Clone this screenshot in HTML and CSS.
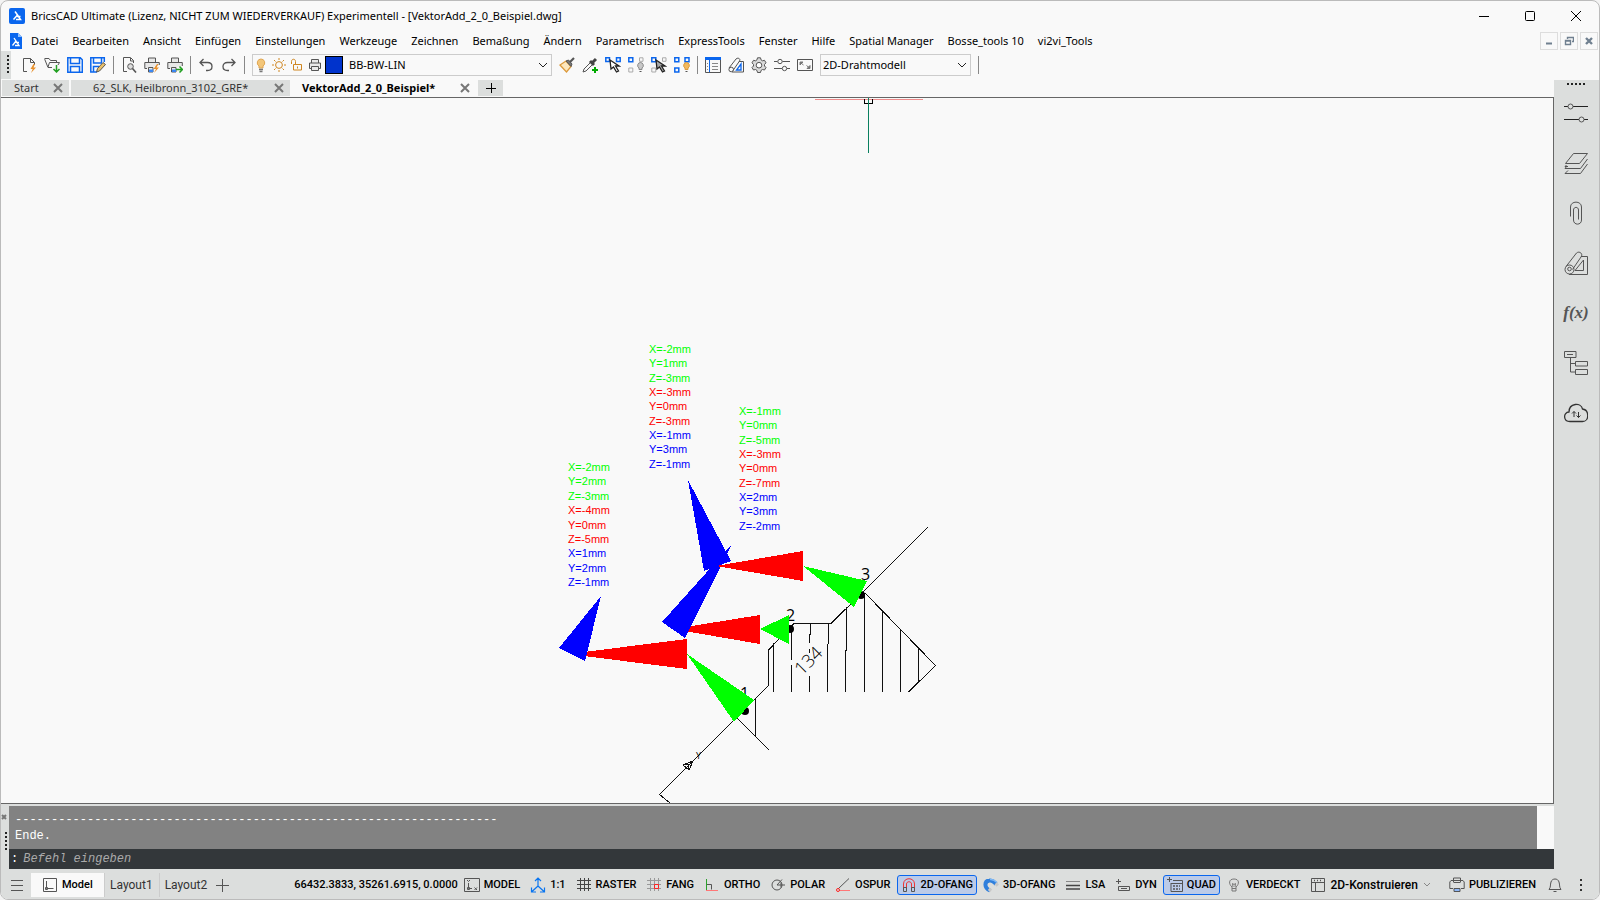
FILE: index.html
```html
<!DOCTYPE html>
<html lang="de">
<head>
    <meta charset="UTF-8">
    <meta name="viewport" content="width=device-width, initial-scale=1.0">
    <title>BricsCAD Ultimate - [VektorAdd_2_0_Beispiel.dwg]</title>
    <link rel="stylesheet" href="styles.css">
</head>
<body>
    <div class="window">
        <header class="titlebar">
            <svg class="logo" viewBox="0 0 16 16"><rect x="0" y="0" width="16" height="16" rx="2" fill="#0a66ee"/><path d="M6 3.500l2.500 3.500M8.500 7L4.500 11.500M8 8.500h3.500M8.500 7l3 4.500H7" fill="none" stroke="#fff" stroke-width="1.500"/></svg>
            <h1>BricsCAD Ultimate (Lizenz, NICHT ZUM WIEDERVERKAUF) Experimentell - [VektorAdd_2_0_Beispiel.dwg]</h1>
            <div class="window-buttons">
                <button aria-label="Minimieren"><svg viewBox="0 0 10 10"><path d="M0 5.500h10"/></svg></button>
                <button aria-label="Maximieren"><svg viewBox="0 0 10 10"><rect x=".5" y=".5" width="9" height="9" rx="1"/></svg></button>
                <button aria-label="Schließen"><svg viewBox="0 0 10 10"><path d="M0 0l10 10M10 0L0 10"/></svg></button>
            </div>
        </header>

        <nav class="menubar">
            <svg class="logo doc" viewBox="0 0 16 16"><path d="M2 0h8l4 4v12H2z" fill="#0a66ee"/><path d="M10 0l4 4h-4z" fill="#8fc0ff"/><path d="M6 5l2 3M8 8l-3.500 4.500M8 9.500h3M8 8l3 4.500H7" fill="none" stroke="#fff" stroke-width="1.300"/></svg>
            <button>Datei</button>
            <button>Bearbeiten</button>
            <button>Ansicht</button>
            <button>Einfügen</button>
            <button>Einstellungen</button>
            <button>Werkzeuge</button>
            <button>Zeichnen</button>
            <button>Bemaßung</button>
            <button>Ändern</button>
            <button>Parametrisch</button>
            <button>ExpressTools</button>
            <button>Fenster</button>
            <button>Hilfe</button>
            <button>Spatial Manager</button>
            <button>Bosse_tools 10</button>
            <button>vi2vi_Tools</button>
            <div class="doc-buttons">
                <button aria-label="Zeichnung minimieren"><svg viewBox="0 0 10 10"><path d="M2 7.500h6" stroke-width="2"/></svg></button>
                <button aria-label="Zeichnung wiederherstellen"><svg viewBox="0 0 10 10"><path d="M3.500 3V1.500h6v4H8M3 1.500h6.500M1.500 4.500h5v4h-5zM1 5h6" stroke-width="1.400"/></svg></button>
                <button aria-label="Zeichnung schließen"><svg viewBox="0 0 10 10"><path d="M2 2l6 6M8 2L2 8" stroke-width="2.400"/></svg></button>
            </div>
        </nav>

        <div class="toolbar">
            <span class="grip"></span>
            <button aria-label="Neu"><svg viewBox="0 0 16 16"><path d="M6 14.500H2.500v-13h7l4 4V8M9.500 1.500v4h4"/><path d="M12.500 7l-3 5h2.200L10 16l5-5.500h-2.500L14 7z" fill="#e8912d" stroke="none"/></svg></button>
            <button aria-label="Öffnen"><svg viewBox="0 0 16 16"><path d="M8 10.500H4L.8 2.500V1.500H5l1.500 2h6v2M4 10l1.500-4.500h10L14 8"/><path d="M12.500 8v6.500M9.500 12l3 3 3-3" stroke="#22a022" stroke-width="1.500"/></svg></button>
            <button aria-label="Speichern"><svg viewBox="0 0 16 16"><path d="M.8.800h12.500l2 2v12.500H.8zM3.500 1v5.500h9V1M3.500 15V9.500h9V15" stroke="#0a66ee" stroke-width="1.500"/></svg></button>
            <button aria-label="Speichern unter"><svg viewBox="0 0 16 16"><path d="M7 15H.8V.800h13.500V5M3.500 1v5h8V1M3.500 15V9.500H9" stroke="#0a66ee" stroke-width="1.500"/><path d="M6.500 15l1-3.500 5.500-6 2.500 2-6 6.500z" fill="#e9c06a" stroke="#555"/></svg></button>
            <span class="sep"></span>
            <button aria-label="Seitenansicht"><svg viewBox="0 0 16 16"><path d="M6 14.500H2.500v-14h7l3 3V6M9.500 1v3h3"/><circle cx="9.500" cy="9.500" r="2.800" fill="#ddd"/><path d="M11.500 11.500l3.500 4" stroke-width="1.600"/></svg></button>
            <button aria-label="Schnelldruck"><svg viewBox="0 0 16 16"><path d="M4.500 5V1h7v4M3 11.500H.8V5.500h14.500V8M4.500 15V10.500H9V15z" fill="#e8e8e8"/><path d="M5 12.500h4V15H5z" fill="#3b86f0" stroke="none"/><path d="M13 7l-3.500 5H12l-2 4 5-5.500h-2.500L14.500 7z" fill="#e8912d" stroke="none"/></svg></button>
            <button aria-label="Drucken"><svg viewBox="0 0 16 16"><path d="M4.500 5V1h7v4M3 11.500H.8V5.500h14.500V9M4.500 15V10.500H9V15z" fill="#e8e8e8"/><path d="M5 12.500h4V15H5z" fill="#3b86f0" stroke="none"/><path d="M9 12.500h6M12.500 9.500l3 3-3 3" stroke="#22a022" stroke-width="1.500"/></svg></button>
            <span class="sep"></span>
            <button aria-label="Rückgängig"><svg viewBox="0 0 16 16"><path d="M5.500 2L2 5.500 5.500 9M2 5.500h7.500c6 0 6 8 0 8H8" stroke-width="1.300"/></svg></button>
            <button aria-label="Wiederholen"><svg viewBox="0 0 16 16"><path d="M10.500 2L14 5.500 10.500 9M14 5.500H6.500c-6 0-6 8 0 8H8" stroke-width="1.300"/></svg></button>
            <span class="sep"></span>
            <div class="combo layer-combo">
                <svg viewBox="0 0 16 16"><path d="M8 2a3.800 3.800 0 0 0-2 7v2h4V9A3.800 3.800 0 0 0 8 2z" fill="#f3c679" stroke="#e0a550"/><path d="M6 12.500h4M6.500 14.500h3" stroke="#777" stroke-width="1.500"/></svg>
                <svg viewBox="0 0 16 16"><circle cx="8" cy="8" r="3.400" stroke="#cf8620"/><path d="M8 1v2M8 13v2M1 8h2M13 8h2M3 3l1.500 1.500M11.500 11.500L13 13M13 3l-1.500 1.500M3 13l1.500-1.500" stroke="#cf8620"/></svg>
                <svg viewBox="0 0 16 16"><path d="M4.500 7.500h8v5.500h-8zM2.500 7V4.500c0-3 4-3 4 0v3M8.500 9.500v2" stroke="#cf8620"/></svg>
                <svg viewBox="0 0 16 16"><path d="M4.500 6V2.500h7V6M4 11.500H2.500V6h11v5.500H12M4.500 9.500h7v4h-7z" fill="#e9e9e9"/></svg>
                <span class="swatch"></span>
                <select aria-label="Layer"><option>BB-BW-LIN</option></select>
                <svg class="chevron" viewBox="0 0 10 10"><path d="M1 3l4 4 4-4"/></svg>
            </div>
            <button aria-label="Eigenschaften übertragen"><svg viewBox="0 0 16 16"><path d="M1 8l6-4 5 5.500-4.500 5.500z" fill="#fde7bd" stroke="#dc9a3c" stroke-width="1.300"/><path d="M7 4l2.500-1L13 7l-1 2.500z" fill="#777" stroke="#555"/><path d="M11 5l4-4" stroke="#555" stroke-width="2.200"/></svg></button>
            <button aria-label="Pipette"><svg viewBox="0 0 16 16"><path d="M9 5L2 12l-1 3 3-1 7-7"/><path d="M8 4l4 4M10.500 5.500L14 2" stroke="#444" stroke-width="3"/><path d="M13 10v6M10 13h6" stroke="#0a0" stroke-width="2"/></svg></button>
            <button aria-label="Objekte isolieren"><svg viewBox="0 0 16 16"><path d="M.8.800h3.700v3.700H.8zM11.500.800h3.700v3.700h-3.700z" stroke="#0a66ee" stroke-width="1.500"/><path d="M5 3l1 9 2.500-2 3 5 2-1-3-5H14z" fill="#fff" stroke="#222" stroke-width="1.300"/></svg></button>
            <button aria-label="Objekte ausblenden"><svg viewBox="0 0 16 16"><path d="M.8.800h4v4h-4z" stroke="#0a66ee" stroke-width="1.500"/><path d="M11.500.800h3.500v3.500h-3.500zM.8 11h4v4h-4z" stroke="#aaa"/><path d="M12.500 5.500a3 3 0 0 0-1.500 5.500v1.500h3V11a3 3 0 0 0-1.500-5.500z" fill="#c8c8c8" stroke="#888"/><path d="M11.500 14.500h2"/></svg></button>
            <button aria-label="Objekte wählen"><svg viewBox="0 0 16 16"><path d="M.8.800h4v4h-4z" stroke="#0a66ee" stroke-width="1.500"/><path d="M11.500.800h3.500v3.500h-3.500zM.8 11h4v4h-4z" stroke="#aaa"/><path d="M5 3l1 9 2.500-2 3 5 2-1-3-5H14z" fill="#aaa" stroke="#222" stroke-width="1.300"/></svg></button>
            <button aria-label="Objekte einblenden"><svg viewBox="0 0 16 16"><path d="M.8.800h4v4h-4zM11 .800h4v4h-4zM.8 11h4v4h-4z" stroke="#0a66ee" stroke-width="1.500"/><path d="M12.500 5.500a3 3 0 0 0-1.500 5.500v1.500h3V11a3 3 0 0 0-1.500-5.500z" fill="#f3b95f" stroke="#dc9a3c"/><path d="M11.500 14.500h2"/></svg></button>
            <span class="sep"></span>
            <button aria-label="Eigenschaften"><svg viewBox="0 0 16 16"><path d="M.5.500h15v15H.5z"/><path d="M0 1.500h16" stroke="#0a66ee" stroke-width="3"/><path d="M4.500 3v12" stroke="#0a66ee"/><path d="M2 6.500h1M2 9.500h1M2 12.500h1M7 6.500h6M7 9.500h6M7 12.500h6" stroke="#888"/></svg></button>
            <button aria-label="Zeichnungsexplorer"><svg viewBox="0 0 16 16"><path d="M1 11L8 2c2-2 5 0 3.500 2L5 13.500M11 4.500h4.500v10.500H4"/><circle cx="3.200" cy="12.500" r="2.300"/><path d="M13 7v6H8.500z" stroke="#0a66ee" stroke-width="1.300"/></svg></button>
            <button aria-label="Einstellungen"><svg viewBox="0 0 16 16"><path d="M6.500.800h3l.5 2 1.500 1 2-.5 1.500 2.500L13.500 7.500v1.500l1.500 1.500-1.500 2.500-2-.5-1.500 1-.5 2h-3l-.5-2-1.500-1-2 .5L1 10.500 2.500 9V7.500L1 5.800l1.500-2.500 2 .5 1.500-1z" fill="#d9d9d9"/><circle cx="8" cy="8.200" r="2.800" fill="#fff"/></svg></button>
            <button aria-label="Optionen"><svg viewBox="0 0 16 16"><path d="M0 4.500h3.500M8.500 4.500H16M0 11.500h8M13 11.500h3"/><circle cx="6" cy="4.500" r="2.200"/><circle cx="10.500" cy="11.500" r="2.200"/></svg></button>
            <button aria-label="Vollbild"><svg viewBox="0 0 16 16"><path d="M.5 2.500h15v11H.5z"/><path d="M3 5h3L3 8zM13 11.500h-3l3-3zM4 6l2.500 2M12 10.500L9.500 8.500" fill="#777" stroke="#777"/></svg></button>
            <div class="combo style-combo">
                <select aria-label="Visueller Stil"><option>2D-Drahtmodell</option></select>
                <svg class="chevron" viewBox="0 0 10 10"><path d="M1 3l4 4 4-4"/></svg>
            </div>
            <span class="sep"></span>
        </div>

        <div class="workspace">
            <main class="document">
                <div class="tabs">
                    <div class="tab tab-start"><button>Start</button><button class="close" aria-label="Start schließen"><svg viewBox="0 0 10 10"><path d="M1 1l8 8M9 1L1 9"/></svg></button></div>
                    <div class="tab tab-file"><button>62_SLK, Heilbronn_3102_GRE*</button><button class="close" aria-label="62_SLK schließen"><svg viewBox="0 0 10 10"><path d="M1 1l8 8M9 1L1 9"/></svg></button></div>
                    <div class="tab tab-active"><button>VektorAdd_2_0_Beispiel*</button><button class="close" aria-label="VektorAdd schließen"><svg viewBox="0 0 10 10"><path d="M1 1l8 8M9 1L1 9"/></svg></button></div>
                    <button class="tab tab-new" aria-label="Neue Zeichnung"><svg viewBox="0 0 10 10"><path d="M5.500 0v10M0 5.500h10"/></svg></button>
                </div>
                <div class="canvas">
                    <svg viewBox="1 98 1552 705" preserveAspectRatio="xMidYMid meet">
                        <!-- cursor -->
                        <g class="crisp" fill="none">
                            <path d="M815 99.500h108" stroke="#f08c8c"/>
                            <path d="M864.500 99v4.500h8V99" stroke="#000"/>
                            <path d="M868.500 98v55" stroke="#0a8060"/>
                        </g>
                        <!-- wall outline and hatch -->
                        <g class="crisp lines">
                            <path d="M928 527L863 592L831 623.500H794L768.500 650V685.500L659.500 794.500L670 803"/>
                            <path d="M737.500 718.500l32 32M755.500 699v37M865 593l70.500 72.500-27 26.500"/>
                            <path d="M773.500 643v49M791.500 629v31M791.500 665v27M810.500 623v10l-1 3v7M809.500 649v4M809.500 676v16M828.500 623v15l-1 13v41M846.500 607v43l-1 1v41M864.500 593v99M882.500 611v81M900.500 629v63M918.500 648v34"/>
                            <path d="M693 761l-10 4 6 5zM683 765l5-1 1 6"/>
                        </g>
                        <circle cx="745" cy="711" r="4"/>
                        <circle cx="790" cy="629" r="4"/>
                        <circle cx="861" cy="595" r="4"/>
                        <g class="labels">
                            <text x="861" y="580">3</text>
                            <text x="786" y="621">2</text>
                            <text x="740" y="699">1</text>
                            <text x="696" y="759" class="axis">Y</text>
                            <text transform="translate(802 676) rotate(-45)" class="road">134</text>
                        </g>
                        <!-- displacement vectors -->
                        <g class="crisp red">
                            <path d="M673 629l87-14v29z"/>
                            <path d="M568 654l119-15v30z"/>
                        </g>
                        <g class="crisp blue">
                            <path d="M688 480l43 81-27 10z"/>
                            <path d="M732 544l-47 94-23-16z"/>
                            <path d="M601 596l-42 52 26 13z"/>
                        </g>
                        <path class="crisp red" d="M716 566l87-15v30z"/>
                        <g class="crisp green">
                            <path d="M687 654l67 46-20 22z"/>
                            <path d="M760 629l29-14v29z"/>
                            <path d="M803 566l64 15-13 26z"/>
                        </g>
                        <text class="values">
                            <tspan class="green" x="649" y="353">X=-2mm</tspan>
                            <tspan class="green" x="649" y="367">Y=1mm</tspan>
                            <tspan class="green" x="649" y="382">Z=-3mm</tspan>
                            <tspan class="red" x="649" y="396">X=-3mm</tspan>
                            <tspan class="red" x="649" y="410">Y=0mm</tspan>
                            <tspan class="red" x="649" y="425">Z=-3mm</tspan>
                            <tspan class="blue" x="649" y="439">X=-1mm</tspan>
                            <tspan class="blue" x="649" y="453">Y=3mm</tspan>
                            <tspan class="blue" x="649" y="468">Z=-1mm</tspan>
                        </text>
                        <text class="values">
                            <tspan class="green" x="739" y="415">X=-1mm</tspan>
                            <tspan class="green" x="739" y="429">Y=0mm</tspan>
                            <tspan class="green" x="739" y="444">Z=-5mm</tspan>
                            <tspan class="red" x="739" y="458">X=-3mm</tspan>
                            <tspan class="red" x="739" y="472">Y=0mm</tspan>
                            <tspan class="red" x="739" y="487">Z=-7mm</tspan>
                            <tspan class="blue" x="739" y="501">X=2mm</tspan>
                            <tspan class="blue" x="739" y="515">Y=3mm</tspan>
                            <tspan class="blue" x="739" y="530">Z=-2mm</tspan>
                        </text>
                        <text class="values">
                            <tspan class="green" x="568" y="471">X=-2mm</tspan>
                            <tspan class="green" x="568" y="485">Y=2mm</tspan>
                            <tspan class="green" x="568" y="500">Z=-3mm</tspan>
                            <tspan class="red" x="568" y="514">X=-4mm</tspan>
                            <tspan class="red" x="568" y="529">Y=0mm</tspan>
                            <tspan class="red" x="568" y="543">Z=-5mm</tspan>
                            <tspan class="blue" x="568" y="557">X=1mm</tspan>
                            <tspan class="blue" x="568" y="572">Y=2mm</tspan>
                            <tspan class="blue" x="568" y="586">Z=-1mm</tspan>
                        </text>
                    </svg>
                </div>
                <section class="command">
                    <div class="command-side">
                        <button aria-label="Befehlszeile schließen"><svg viewBox="0 0 6 6"><path d="M1 1l4 4M5 1L1 5"/></svg></button>
                        <span class="dots-v"></span>
                    </div>
                    <div class="command-body">
                        <div class="history">
                            <p>-------------------------------------------------------------------</p>
                            <p>Ende.</p>
                        </div>
                        <div class="prompt"><label for="cmd">:</label><input id="cmd" type="text" placeholder="Befehl eingeben"></div>
                    </div>
                </section>
            </main>

            <aside class="panels">
                <span class="dots-h"></span>
                <button aria-label="Eigenschaften"><svg viewBox="0 0 24 24"><path d="M0 5.500h4M9 5.500h15M0 18.500h15M20 18.500h4" stroke="#222"/><circle cx="6.500" cy="5.500" r="2.500"/><circle cx="17.500" cy="18.500" r="2.500"/></svg></button>
                <button aria-label="Layer"><svg viewBox="0 0 24 24"><path d="M9.500 2.500h14l-8 10h-14zM4 15.500H1L2.500 14M1 17.500h15.500L23.500 8M1 17.500l2-2.500M1 22.500h15.500l7-9.500M1 22.500l3-3"/></svg></button>
                <button aria-label="Anhänge"><svg viewBox="0 0 24 24"><path d="M6.500 15.500V6c0-6.500 11-6.500 11 0v13c0 5.500-8 5.500-8 0V9c0-3.500 5-3.500 5 0v9.500"/></svg></button>
                <button aria-label="Zeichnungsexplorer"><svg viewBox="0 0 24 24"><path d="M2 15.500L12.500 2c3-2.500 7 1 4.500 4L8.500 18.500M17 5.500h6.500v18H5M19.500 9v10.500H11z"/><circle cx="5.500" cy="18.500" r="4.500"/><circle cx="5.500" cy="18" r="1.800"/></svg></button>
                <button class="fx" aria-label="Parameter">f(x)</button>
                <button aria-label="Struktur"><svg viewBox="0 0 24 24"><path d="M.5.500h11.500v6H.5zM3 3.500h6M6.500 6.500v14.500h5M6.500 12.500h5M11.500 10.500h12v4.500h-12zM11.500 18.500h12v5h-12z"/></svg></button>
                <button aria-label="Cloud"><svg viewBox="0 0 24 24"><path d="M6 20.500C-1 20.500-1 11.500 5 11c0-9 12-10 13.500-3 7 1 7 12.500 0 12.500z" stroke="#333" stroke-width="1.300"/><path d="M10 16v-5.500M8 12.500l2-2 2 2M14.500 11v5.500M12.500 14.500l2 2 2-2" stroke="#333"/></svg></button>
            </aside>
        </div>

        <footer class="statusbar">
            <button class="icon-only" aria-label="Layoutmenü"><svg viewBox="0 0 16 16"><path d="M2 3.500h12M2 8.500h12M2 13.500h12"/></svg></button>
            <div class="layouts">
                <button class="layout current"><svg viewBox="0 0 16 16"><path d="M1.500 1.500h13v13h-13zM4.500 4v7.500h7"/><path d="M3.500 10.500h2v2h-2z"/></svg>Model</button>
                <button class="layout">Layout1</button>
                <button class="layout">Layout2</button>
            </div>
            <button class="icon-only" aria-label="Neues Layout"><svg viewBox="0 0 16 16"><path d="M8.500 2v13M2 8.500h13"/></svg></button>
            <output class="coords">66432.3833, 35261.6915, 0.0000</output>
            <div class="modes">
                <button><svg viewBox="0 0 16 16"><path d="M.5 1.500h15v13H.5zM4.500 6v5.500H8M3 3l1.500 1.500L6 3M10.500 10.500l2.500 2.500M13 10.500L10.500 13"/><path d="M3.500 10.500h2v2h-2z"/></svg>MODEL</button>
                <button><svg viewBox="0 0 16 16"><path d="M8 9V1.500M5 4l3-3 3 3M8 9L2 14.500M1.500 10.500V15H6M8 9l6 5.500M14.500 10.500V15H10" stroke="#0a75f0" stroke-width="1.200"/></svg>1:1</button>
                <button><svg viewBox="0 0 16 16"><path d="M4.500 1v13M8.500 1v13M12.500 1v13M1 3.500h14M1 7.500h14M1 11.500h14" stroke="#444"/></svg>RASTER</button>
                <button><svg viewBox="0 0 16 16"><path d="M4.500 1v13M8.500 1v13M12.500 1v13M1 3.500h14M1 7.500h14M1 11.500h14" stroke="#999"/><path d="M8.500 7.500h4v4h-4z" stroke="#f22"/></svg>FANG</button>
                <button><svg viewBox="0 0 16 16"><path d="M2.500 2v11" stroke="#2ca02c"/><path d="M2 13.500h12" stroke="#f77"/><path d="M3 7.500h4.500v5"/></svg>ORTHO</button>
                <button><svg viewBox="0 0 16 16"><circle cx="7" cy="8" r="5"/><path d="M7 8h8M7 8l5-5.500M11 5.500v5"/></svg>POLAR</button>
                <button><svg viewBox="0 0 16 16"><path d="M3 12L14 1.500"/><path d="M4 13.500h11" stroke="#f77"/><circle cx="3" cy="13" r="1.500" stroke="#f22"/></svg>OSPUR</button>
                <button class="on"><svg viewBox="0 0 16 16"><path d="M2.500 11V7C2.500 0 13.500 0 13.500 7v4M5.500 11V7c0-3 5-3 5 0v4" stroke="#e33"/><path d="M2.500 10.500h3v4h-3zM10.500 10.500h3v4h-3z"/></svg>2D-OFANG</button>
                <button><svg viewBox="0 0 16 16"><path d="M7 13.500C1 11 1 4 6.500 3.500c3-.5 4 1 6.500 3.500" stroke="#2f7fdc" stroke-width="4"/><path d="M7 2.500c3-.5 5 1 7 3" stroke="#7db8f5" stroke-width="1.500"/><path d="M6 14l2-2.500M12.500 8.500l2.500-2" stroke="#c8c8c8" stroke-width="3"/></svg>3D-OFANG</button>
                <button><svg viewBox="0 0 16 16"><path d="M1 4.500h14" stroke="#888"/><path d="M1 8.500h14M1 12h14" stroke="#444" stroke-width="1.500"/></svg>LSA</button>
                <button><svg viewBox="0 0 16 16"><path d="M1 4.500h5M3.500 2v5M3.500 9.500h11v4h-11zM6 11.500h6"/></svg>DYN</button>
                <button class="on"><svg viewBox="0 0 16 16"><path d="M0 2.500h5M2.500 0v5M4 6v8.500h11.500v-11H6M4 6.500h11"/><path d="M6 9h7M6 12h7" stroke-width="1.500" stroke-dasharray="2 1"/></svg>QUAD</button>
                <button><svg viewBox="0 0 16 16"><path d="M8 2c-5.500 0-5.500 5-2 8v4h4v-4c3.500-3 3.500-8-2-8zM6 11.500h4M7 10L6.500 6.500 8 7.500l1.500-1L9 10" stroke="#777"/></svg>VERDECKT</button>
            </div>
            <button class="workspace-switch"><svg viewBox="0 0 16 16"><path d="M1.500 1.500h13v13h-13zM1.500 5.500h13M5.500 5.500v9"/><path d="M4 3.500h1M7 3.500h1M10 3.500h1" stroke-width="1.500"/></svg>2D-Konstruieren<svg class="chevron" viewBox="0 0 10 10"><path d="M2 3l3 3 3-3"/></svg></button>
            <button class="publish"><svg viewBox="0 0 16 16"><path d="M4.500 5V1h7v4M4 11.500H.8V5L2 3.500h12L15.200 5v6.500H12M4.500 5.500h7"/><path d="M5 11.500h6v3H5z" fill="#8db6f5"/></svg>PUBLIZIEREN</button>
            <button class="icon-only" aria-label="Benachrichtigungen"><svg viewBox="0 0 16 16"><path d="M2 12.500C4 10 3 8 4 5c1-4 7-4 8 0 1 3 0 5 2 7.500zM6.500 14.500h3"/></svg></button>
            <button class="icon-only" aria-label="Weitere"><svg viewBox="0 0 16 16"><path d="M8 2v2M8 7v2M8 12v2" stroke="#333" stroke-width="2"/></svg></button>
        </footer>
    </div>
</body>
</html>
```
FILE: styles.css
```css
* {
    box-sizing: border-box;
}

body {
    margin: 0;
    background: #f3f3f3;
    color: #000;
    font-family: "Noto Sans", "Open Sans", sans-serif;
    font-size: 11px;
}

button,
input,
select {
    font: inherit;
    color: inherit;
    background: none;
    border: none;
    margin: 0;
    padding: 0;
}

svg {
    display: block;
    fill: none;
    stroke: #555;
    flex: none;
}

.window {
    display: flex;
    flex-direction: column;
    height: 100vh;
    overflow: hidden;
    background: #f9f9f9;
    border: 1px solid #bbb;
    border-radius: 8px;
}

.logo {
    width: 16px;
    height: 16px;
    stroke: none;
}

/* title bar */
.titlebar {
    display: flex;
    align-items: center;
    height: 29px;
    padding-left: 8px;
    gap: 6px;
}

.titlebar h1 {
    margin: 0;
    font-size: 11px;
    font-weight: 400;
    white-space: nowrap;
}

.window-buttons {
    display: flex;
    margin-left: auto;
}

.window-buttons button {
    display: flex;
    justify-content: center;
    width: 46px;
}

.window-buttons svg {
    width: 10px;
    height: 10px;
    stroke: #000;
}

/* menu bar */
.menubar {
    display: flex;
    align-items: center;
    height: 21px;
    padding-left: 7px;
}

.menubar > button {
    padding: 0 7px;
    white-space: nowrap;
}

.doc-buttons {
    display: flex;
    gap: 2px;
    margin-left: auto;
    padding-right: 1px;
}

.doc-buttons button {
    display: flex;
    align-items: center;
    justify-content: center;
    width: 18px;
    height: 18px;
    border: 1px solid #ddd;
}

.doc-buttons svg {
    width: 10px;
    height: 10px;
    stroke: #708090;
}

/* toolbar */
.toolbar {
    display: flex;
    align-items: center;
    height: 29px;
    padding-bottom: 2px;
    gap: 7px;
}

.grip {
    width: 10px;
    height: 28px;
    margin-right: 3px;
    background: #dcdedd;
}

.grip::after,
.dots-v {
    content: "";
    display: block;
    width: 2px;
    height: 20px;
    margin: 4px 0 0 6px;
    background: repeating-linear-gradient(#222 0 2px, transparent 2px 4px);
}

.toolbar svg {
    width: 16px;
    height: 16px;
}

.sep {
    width: 1px;
    height: 18px;
    background: #888;
}

.combo {
    display: flex;
    align-items: center;
    height: 22px;
    border: 1px solid #ccc;
    background: #f9f9f9;
}

.layer-combo {
    width: 300px;
    gap: 2px;
}

.style-combo {
    width: 151px;
    padding-left: 2px;
}

.combo select {
    flex: 1;
    min-width: 0;
    appearance: none;
}

.layer-combo select {
    padding-left: 4px;
}

.toolbar .chevron {
    width: 10px;
    height: 10px;
    margin-right: 3px;
    stroke: #222;
}

.swatch {
    width: 18px;
    height: 18px;
    border: 1px solid #000;
    background: #0033cc;
}

/* document area */
.workspace {
    display: flex;
    flex: 1;
    min-height: 0;
}

.document {
    display: flex;
    flex-direction: column;
    flex: 1;
    min-width: 0;
}

.tabs {
    display: flex;
    height: 17px;
    padding-left: 1px;
    gap: 2px;
}

.tab {
    display: flex;
    align-items: center;
    height: 16px;
    background: #dcdedd;
    color: #333;
    line-height: 16px;
}

.tab .close {
    margin-left: auto;
}

.tab svg {
    width: 10px;
    height: 10px;
    stroke: #777;
    stroke-width: 2;
}

.tab-start {
    width: 67px;
    padding: 0 6px 0 12px;
}

.tab-file {
    width: 219px;
    padding: 0 6px 0 22px;
}

.tab-active {
    width: 184px;
    padding: 0 6px 0 10px;
    background: none;
    color: #000;
    font-weight: 700;
}

.tab-new {
    width: 25px;
    justify-content: center;
}

.tab-new svg {
    stroke: #000;
    stroke-width: 1;
}

.canvas {
    flex: 1;
    min-height: 0;
    border: 1px solid #666;
    border-left: none;
}

.canvas svg {
    width: 100%;
    height: 100%;
    fill: #000;
    stroke: none;
}

.crisp {
    shape-rendering: crispEdges;
}

.canvas .lines {
    fill: none;
    stroke: #111;
}

.red {
    fill: #f00;
}

.green {
    fill: #0f0;
}

.blue {
    fill: #00f;
}

.values {
    font-family: "Liberation Sans", Arial, sans-serif;
    font-size: 11px;
}

.labels {
    font-family: "Open Sans", sans-serif;
    font-size: 16px;
}

.labels .axis {
    font-size: 9px;
}

.labels .road {
    font-size: 18px;
    font-weight: 300;
}

/* command line */
.command {
    display: flex;
    padding-top: 2px;
    background: #dcdedd;
    font-family: "Liberation Mono", monospace;
    font-size: 12px;
}

.command-side {
    width: 8px;
    padding-top: 4px;
}

.command-side svg {
    width: 6px;
    height: 6px;
    stroke: #777;
    stroke-width: 2;
}

.command-side .dots-v {
    margin: 8px 0 0 4px;
}

.command-body {
    flex: 1;
}

.history {
    height: 43px;
    padding: 6px 0 0 6px;
    border-right: 17px solid #f9f9f9;
    background: #828282;
    color: #fff;
}

.history p {
    margin: 0;
    line-height: 16px;
}

.prompt {
    display: flex;
    align-items: center;
    height: 20px;
    padding-left: 2px;
    gap: 5px;
    background: #33373a;
    color: #fff;
}

.prompt input {
    flex: 1;
    outline: none;
}

.prompt input::placeholder {
    color: #aaa;
    font-style: italic;
    opacity: 1;
}

/* side panels */
.panels {
    display: flex;
    flex-direction: column;
    align-items: center;
    width: 45px;
    padding-right: 1px;
    gap: 26px;
    background: #dcdedd;
}

.dots-h {
    width: 18px;
    height: 2px;
    margin: 3px 0 -10px;
    background: repeating-linear-gradient(90deg, #222 0 2px, transparent 2px 4px);
}

.panels svg {
    width: 24px;
    height: 24px;
}

.fx {
    height: 24px;
    font-family: "Liberation Serif", serif;
    font-size: 17px;
    font-style: italic;
    font-weight: 700;
    line-height: 24px;
    color: #555;
}

/* status bar */
.statusbar {
    display: flex;
    align-items: center;
    height: 30px;
    padding: 1px 10px 0 8px;
    background: #dcdedd;
    font-family: Roboto, sans-serif;
    font-size: 11px;
    font-weight: 500;
    white-space: nowrap;
}

.statusbar svg {
    width: 16px;
    height: 16px;
}

.statusbar button {
    display: flex;
    align-items: center;
    gap: 4px;
}

.layouts {
    display: flex;
    margin: 0 1px 0 6px;
}

.layout {
    height: 24px;
    padding: 0 6px 0 5px;
    border-right: 1px solid #ccc;
    color: #333;
    font-size: 12px;
    font-weight: 400;
}

.layout:last-child {
    border-right: none;
}

.statusbar .current {
    width: 74px;
    padding: 0 0 0 11px;
    background: #f9f9f9;
    color: #000;
    font-size: 11px;
    font-weight: 500;
}

.coords {
    margin: 0 2px 0 auto;
}

.modes {
    display: flex;
    gap: 2px;
}

.modes button {
    height: 20px;
    padding: 0 3px;
    border: 1px solid transparent;
    border-radius: 3px;
}

.modes .on {
    border-color: #0a66ee;
    background: #bccbe8;
}

.workspace-switch {
    margin-left: 6px;
    font-size: 12px;
}

.statusbar .chevron {
    width: 10px;
    height: 10px;
    stroke: #888;
}

.publish {
    margin: 0 11px 0 17px;
}

.publish + .icon-only {
    margin-right: 10px;
}
```
